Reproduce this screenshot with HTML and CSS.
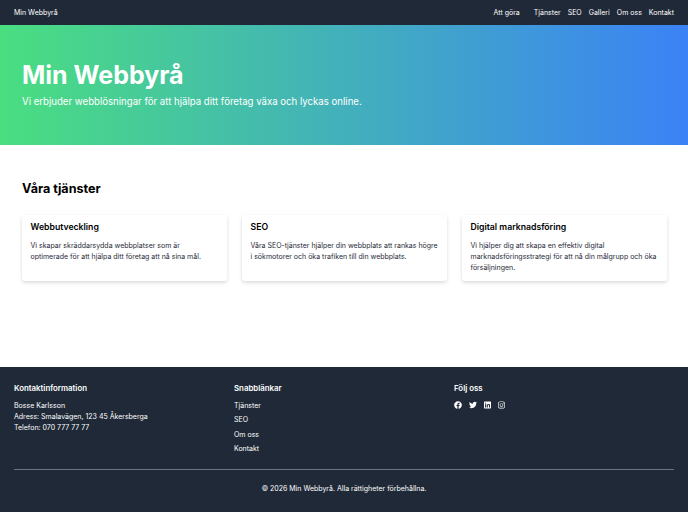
FILE: index.html
```html
<!DOCTYPE html>
<html lang="sv">

<head>
  <meta charset="UTF-8">
  <meta name="viewport" content="width=device-width, initial-scale=1.0">
  <title>Min Webbyrå</title>
  <link rel="stylesheet" href="styles.css">
</head>

<body>
  <nav class="site-nav">
    <a class="nav-brand" href="#">Min Webbyrå</a>
    <div class="nav-links">
      <a class="nav-todo" href="#">Att göra</a>
      <a href="#">Tjänster</a>
      <a href="#">SEO</a>
      <a href="#">Galleri</a>
      <a href="#">Om oss</a>
      <a href="#">Kontakt</a>
    </div>
  </nav>

  <header class="hero">
    <h1 class="hero-title">Min Webbyrå</h1>
    <p class="hero-text">Vi erbjuder webblösningar för att hjälpa ditt företag växa och lyckas online.</p>
  </header>

  <main class="services">
    <h2 class="services-title">Våra tjänster</h2>
    <div class="card-grid">
      <div class="card">
        <h3 class="card-title">Webbutveckling</h3>
        <p class="card-text">Vi skapar skräddarsydda webbplatser som är optimerade för att hjälpa ditt företag att nå sina mål.</p>
      </div>
      <div class="card">
        <h3 class="card-title">SEO</h3>
        <p class="card-text">Våra SEO-tjänster hjälper din webbplats att rankas högre i sökmotorer och öka trafiken till din webbplats.</p>
      </div>
      <div class="card">
        <h3 class="card-title">Digital marknadsföring</h3>
        <p class="card-text">Vi hjälper dig att skapa en effektiv digital marknadsföringsstrategi för att nå din målgrupp och öka försäljningen.</p>
      </div>
    </div>
  </main>

  <footer class="site-footer">
    <div class="footer-columns">
      <div>
        <h4 class="footer-title">Kontaktinformation</h4>
        <p class="footer-text">Bosse Karlsson<br>Adress: Smalavägen, 123 45 Åkersberga<br>Telefon: 070 777 77 77</p>
      </div>
      <div>
        <h4 class="footer-title">Snabblänkar</h4>
        <ul class="footer-links">
          <li><a href="#">Tjänster</a></li>
          <li><a href="#">SEO</a></li>
          <li><a href="#">Om oss</a></li>
          <li><a href="#">Kontakt</a></li>
        </ul>
      </div>
      <div>
        <h4 class="footer-title">Följ oss</h4>
        <div class="social-icons">
          <a href="#" aria-label="Facebook">
            <svg viewBox="0 0 512 512"><path d="M504 256C504 119 393 8 256 8S8 119 8 256c0 123.78 90.69 226.38 209.25 245V327.69h-63V256h63v-54.64c0-62.15 37-96.48 93.67-96.48 27.14 0 55.52 4.84 55.52 4.84v61h-31.28c-30.8 0-40.41 19.12-40.41 38.73V256h68.78l-11 71.69h-57.78V501C413.31 482.38 504 379.78 504 256z"/></svg>
          </a>
          <a href="#" aria-label="Twitter">
            <svg viewBox="0 0 512 512"><path d="M459.37 151.716c.325 4.548.325 9.097.325 13.645 0 138.72-105.583 298.558-298.558 298.558-59.452 0-114.68-17.219-161.137-47.106 8.447.974 16.568 1.299 25.34 1.299 49.055 0 94.213-16.568 130.274-44.832-46.132-.975-84.792-31.188-98.112-72.772 6.498.974 12.995 1.624 19.818 1.624 9.421 0 18.843-1.3 27.614-3.573-48.081-9.747-84.143-51.98-84.143-102.985v-1.299c13.969 7.797 30.214 12.67 47.431 13.319-28.264-18.843-46.781-51.005-46.781-87.391 0-19.492 5.197-37.36 14.294-52.954 51.655 63.675 129.3 105.258 216.365 109.807-1.624-7.797-2.599-15.918-2.599-24.04 0-57.828 46.782-104.934 104.934-104.934 30.213 0 57.502 12.67 76.67 33.137 23.715-4.548 46.456-13.32 66.599-25.34-7.798 24.366-24.366 44.833-46.132 57.827 21.117-2.273 41.584-8.122 60.426-16.243-14.292 20.791-32.161 39.308-52.628 54.253z"/></svg>
          </a>
          <a href="#" aria-label="LinkedIn">
            <svg viewBox="0 0 448 512"><path d="M416 32H31.9C14.3 32 0 46.5 0 64.3v383.4C0 465.5 14.3 480 31.9 480H416c17.6 0 32-14.5 32-32.3V64.3c0-17.8-14.4-32.3-32-32.3zM135.4 416H69V202.2h66.5V416zm-33.2-243c-21.3 0-38.5-17.3-38.5-38.5S80.9 96 102.2 96c21.2 0 38.5 17.3 38.5 38.5 0 21.3-17.2 38.5-38.5 38.5zm282.1 243h-66.4V312c0-24.8-.5-56.7-34.5-56.7-34.6 0-39.9 27-39.9 54.9V416h-66.4V202.2h63.7v29.2h.9c8.9-16.8 30.6-34.5 62.9-34.5 67.2 0 79.7 44.3 79.7 101.9V416z"/></svg>
          </a>
          <a href="#" aria-label="Instagram">
            <svg viewBox="0 0 448 512"><path d="M224.1 141c-63.6 0-114.9 51.3-114.9 114.9s51.3 114.9 114.9 114.9S339 319.5 339 255.9 287.7 141 224.1 141zm0 189.6c-41.1 0-74.7-33.5-74.7-74.7s33.5-74.7 74.7-74.7 74.7 33.5 74.7 74.7-33.6 74.7-74.7 74.7zm146.4-194.3c0 14.9-12 26.8-26.8 26.8-14.9 0-26.8-12-26.8-26.8s12-26.8 26.8-26.8 26.8 12 26.8 26.8zm76.1 27.2c-1.7-35.9-9.9-67.7-36.2-93.9-26.2-26.2-58-34.4-93.9-36.2-37-2.1-147.9-2.1-184.9 0-35.8 1.7-67.6 9.9-93.9 36.1s-34.4 58-36.2 93.9c-2.1 37-2.1 147.9 0 184.9 1.7 35.9 9.9 67.7 36.2 93.9s58 34.4 93.9 36.2c37 2.1 147.9 2.1 184.9 0 35.9-1.7 67.7-9.9 93.9-36.2 26.2-26.2 34.4-58 36.2-93.9 2.1-37 2.1-147.8 0-184.8zM398.8 388c-7.8 19.6-22.9 34.7-42.6 42.6-29.5 11.7-99.5 9-132.1 9s-102.7 2.6-132.1-9c-19.6-7.8-34.7-22.9-42.6-42.6-11.7-29.5-9-99.5-9-132.1s-2.6-102.7 9-132.1c7.8-19.6 22.9-34.7 42.6-42.6 29.5-11.7 99.5-9 132.1-9s102.7-2.6 132.1 9c19.6 7.8 34.7 22.9 42.6 42.6 11.7 29.5 9 99.5 9 132.1s2.7 102.7-9 132.1z"/></svg>
          </a>
        </div>
      </div>
    </div>
    <div class="footer-bottom">© 2026 Min Webbyrå. Alla rättigheter förbehållna.</div>
  </footer>
</body>

</html>
```

FILE: styles.css
```css
* {
  margin: 0;
  padding: 0;
  box-sizing: border-box;
}

body {
  font-family: 'Inter', sans-serif;
  background: #fff;
  color: #000;
  font-size: 7px;
}

a {
  color: inherit;
  text-decoration: none;
}

.site-nav {
  height: 25px;
  background: #1f2937;
  color: #fff;
  padding: 0 14px;
  display: flex;
  justify-content: space-between;
  align-items: center;
}

.nav-links {
  display: flex;
  gap: 7px;
}

.nav-todo {
  margin-right: 7px;
}

.hero {
  height: 120px;
  padding: 35px 22px 0;
  background: linear-gradient(to right, #4ade80, #3b82f6);
  color: #fff;
}

.hero-title {
  font-size: 25px;
  font-weight: 700;
  line-height: 30px;
  margin-bottom: 4px;
}

.hero-text {
  font-size: 9.65px;
  line-height: 16px;
}

.services {
  height: 222px;
  padding: 35px 22px 0;
}

.services-title {
  font-size: 12.6px;
  font-weight: 700;
  line-height: 18px;
  margin-bottom: 17px;
}

.card-grid {
  display: grid;
  grid-template-columns: repeat(3, 205px);
  gap: 15px;
}

.card {
  height: 66px;
  padding: 6px 8.5px;
  background: #fff;
  border-radius: 3px;
  box-shadow: 0 2px 4px rgba(0, 0, 0, 0.1), 0 1px 3px rgba(0, 0, 0, 0.06);
}

.card-title {
  font-size: 8.7px;
  font-weight: 600;
  line-height: 12px;
  margin-bottom: 7px;
}

.card-text {
  line-height: 11px;
  color: #1f2937;
}

.site-footer {
  height: 145px;
  padding: 15px 14px 0;
  background: #1f2937;
  color: #fff;
}

.footer-columns {
  display: grid;
  grid-template-columns: repeat(3, 1fr);
  height: 88px;
  border-bottom: 1px solid #6b7280;
}

.footer-title {
  font-size: 7.85px;
  font-weight: 600;
  line-height: 12px;
  margin-bottom: 7px;
}

.footer-text {
  line-height: 10.9px;
}

.footer-links {
  list-style: none;
}

.footer-links li {
  line-height: 10px;
  margin-bottom: 4.3px;
}

.social-icons {
  display: flex;
  gap: 7px;
}

.social-icons svg {
  display: block;
  height: 8px;
  fill: #fff;
}

.footer-bottom {
  padding-top: 14px;
  text-align: center;
  line-height: 10px;
}
```
